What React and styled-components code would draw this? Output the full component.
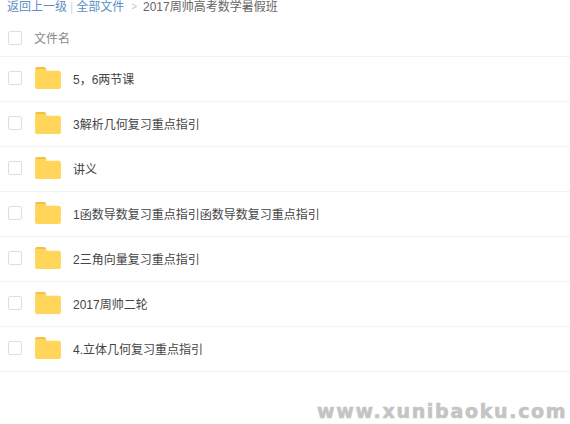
import React from 'react';
import styled, { createGlobalStyle } from 'styled-components';

const GlobalStyle = createGlobalStyle`
  html, body {
    margin: 0;
    padding: 0;
    background: #fff;
  }
  body {
    font-family: "Liberation Sans", "Noto Sans CJK SC", sans-serif;
  }
`;

const Page = styled.div`
  position: relative;
  width: 570px;
  height: 424px;
  overflow: hidden;
  background: #fff;
`;

const Breadcrumb = styled.div`
  display: flex;
  align-items: center;
  height: 14px;
  padding-left: 7px;
  font-size: 12px;
  line-height: 14px;
  color: #666;
`;

const CrumbLink = styled.span`
  color: #5b8ec4;
`;

const Divider = styled.span`
  color: #c5d8eb;
  margin: 0 3px;
`;

const Arrow = styled.span`
  color: #c8c8c8;
  font-size: 10px;
  margin: 0 6px 0 7px;
`;

const HeaderRow = styled.div`
  display: flex;
  align-items: center;
  height: 43px;
  padding: 6px 0 0 8px;
  box-sizing: border-box;
  border-bottom: 1px solid #f3f3f3;
`;

const Row = styled.div`
  display: flex;
  align-items: center;
  height: 42px;
  padding: 0 0 2px 8px;
  border-bottom: 1px solid #f3f3f3;
`;

const Check = styled.span`
  display: block;
  width: 12px;
  height: 12px;
  border: 1px solid #dedede;
  border-radius: 2px;
  flex: none;
`;

const HeaderLabel = styled.span`
  margin: 0 0 2px 12px;
  font-size: 12px;
  color: #888;
`;

const Name = styled.span`
  margin-left: 12px;
  font-size: 12px;
  color: #444;
`;

const FolderSvg = styled.svg`
  display: block;
  margin-left: 13px;
  flex: none;
`;

const Watermark = styled.div`
  position: absolute;
  left: 317px;
  top: 400px;
  font-family: "DejaVu Sans", sans-serif;
  font-size: 19px;
  font-weight: 700;
  line-height: 22px;
  letter-spacing: 1.7px;
  color: #c4c4c4;
  -webkit-text-stroke: 0.6px #c4c4c4;
  white-space: nowrap;
`;

const Folder = () => (
  <FolderSvg width="26" height="22" viewBox="0 0 27 23">
    <path d="M0 2a2 2 0 0 1 2-2h7a2 2 0 0 1 2 1l1 2h-12z" fill="#f5bf3f" />
    <path d="M0 4a2 2 0 0 1 2-2h8l2 2h13a2 2 0 0 1 2 2v15a2 2 0 0 1-2 2H2a2 2 0 0 1-2-2z" fill="#ffd659" />
  </FolderSvg>
);

const files = [
  '5，6两节课',
  '3解析几何复习重点指引',
  '讲义',
  '1函数导数复习重点指引函数导数复习重点指引',
  '2三角向量复习重点指引',
  '2017周帅二轮',
  '4.立体几何复习重点指引',
];

export default function App() {
  return (
    <Page>
      <GlobalStyle />
      <Breadcrumb>
        <CrumbLink>返回上一级</CrumbLink>
        <Divider>|</Divider>
        <CrumbLink>全部文件</CrumbLink>
        <Arrow>&gt;</Arrow>
        <span>2017周帅高考数学暑假班</span>
      </Breadcrumb>
      <HeaderRow>
        <Check />
        <HeaderLabel>文件名</HeaderLabel>
      </HeaderRow>
      {files.map((name) => (
        <Row key={name}>
          <Check />
          <Folder />
          <Name>{name}</Name>
        </Row>
      ))}
      <Watermark>www.xunibaoku.com</Watermark>
    </Page>
  );
}
